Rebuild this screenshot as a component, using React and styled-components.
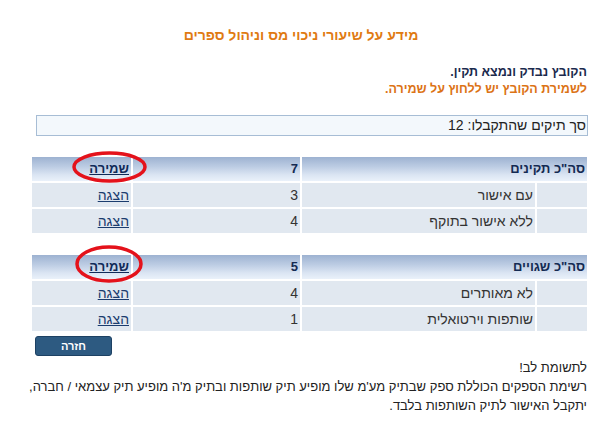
import styled, { createGlobalStyle } from "styled-components";

const GlobalStyle = createGlobalStyle`
  body {
    margin: 0;
    background: #ffffff;
    font-family: "Liberation Sans", Arial, sans-serif;
  }
`;

const groups = [
    {
        title: 'סה"כ תקינים',
        total: 7,
        ring: { left: 40, top: -6, width: 75, height: 32 },
        rows: [
            { label: "עם אישור", count: 3 },
            { label: "ללא אישור בתוקף", count: 4 },
        ],
        top: 21,
    },
    {
        title: 'סה"כ שגויים',
        total: 5,
        ring: { left: 43, top: -10, width: 68, height: 38 },
        rows: [
            { label: "לא מאותרים", count: 4 },
            { label: "שותפות וירטואלית", count: 1 },
        ],
        top: 22,
    },
];

const Ring = ({ left, top, width, height }) => (
    <RingSvg
        $left={left}
        $top={top}
        width={width}
        height={height}
        viewBox={`0 0 ${width} ${height}`}
    >
        <ellipse
            cx={width / 2}
            cy={height / 2}
            rx={width / 2 - 2}
            ry={height / 2 - 2}
            fill="none"
            stroke="#e4121b"
            strokeWidth="3.5"
        />
    </RingSvg>
);

const SummaryTable = ({ group }) => {
    return (
        <Table $top={group.top}>
            <HeadCell $span={2}>{group.title}</HeadCell>
            <HeadCell>{group.total}</HeadCell>
            <HeadCell $link>
                <SaveLink href="#">שמירה</SaveLink>
                <Ring {...group.ring} />
            </HeadCell>
            {group.rows.map((row) => (
                <RowGroup key={row.label}>
                    <Cell />
                    <Cell>{row.label}</Cell>
                    <Cell>{row.count}</Cell>
                    <Cell>
                        <ShowLink href="#">הצגה</ShowLink>
                    </Cell>
                </RowGroup>
            ))}
        </Table>
    );
};

const App = () => {
    return (
        <>
            <GlobalStyle />
            <Page>
                <Title>מידע על שיעורי ניכוי מס וניהול ספרים</Title>
                <Content>
                    <Status>
                        <StatusLine>הקובץ נבדק ונמצא תקין.</StatusLine>
                        <StatusLine $accent>לשמירת הקובץ יש ללחוץ על שמירה.</StatusLine>
                    </Status>
                    <CountBox>סך תיקים שהתקבלו: 12</CountBox>
                    {groups.map((group) => (
                        <SummaryTable key={group.title} group={group} />
                    ))}
                    <BackButton type="button">חזרה</BackButton>
                    <Note>
                        <NoteLine>לתשומת לב!</NoteLine>
                        <NoteLine>
                            רשימת הספקים הכוללת ספק שבתיק מע'מ שלו מופיע תיק שותפות
                            ובתיק מ'ה מופיע תיק עצמאי / חברה,
                        </NoteLine>
                        <NoteLine>יתקבל האישור לתיק השותפות בלבד.</NoteLine>
                    </Note>
                </Content>
            </Page>
        </>
    );
};

const Page = styled.div`
    direction: rtl;
    width: 602px;
    padding-top: 26px;
    color: #222222;
    font-size: 14px;
`;

const Title = styled.h1`
    margin: 0;
    text-align: center;
    font-size: 14px;
    line-height: 18px;
    font-weight: bold;
    color: #e07a12;
`;

const Content = styled.div`
    padding: 0 15px 0 32px;
`;

const Status = styled.div`
    margin-top: 20px;
    font-size: 12.5px;
    font-weight: bold;
    line-height: 17px;
`;

const StatusLine = styled.div`
    color: ${(props) => (props.$accent ? "#dc7316" : "#1b2a4e")};
`;

const CountBox = styled.div`
    margin: 17px -1px 0 4px;
    height: 19px;
    line-height: 19px;
    padding-right: 1px;
    border: 1px solid #a7bdd5;
    background-color: #f3f8fc;
    color: #222222;
`;

const Table = styled.div`
    display: grid;
    grid-template-columns: 50px 233px 167px 99px;
    grid-auto-rows: 24px;
    gap: 2px;
    margin-top: ${(props) => props.$top}px;
`;

const RowGroup = styled.div`
    display: contents;
`;

const HeadCell = styled.div`
    position: relative;
    grid-column: span ${(props) => props.$span || 1};
    padding-right: 2px;
    line-height: 24px;
    font-size: 13px;
    font-weight: bold;
    color: #142a52;
    background: linear-gradient(
        to bottom,
        #9db2d1 0%,
        #bccce3 40%,
        #dbe5f3 75%,
        #eaf1fa 100%
    );
    z-index: ${(props) => (props.$link ? 2 : "auto")};
`;

const Cell = styled.div`
    padding-right: 2px;
    line-height: 24px;
    background-color: #e1e8f0;
    color: #333333;
`;

const SaveLink = styled.a`
    color: #102a58;
    font-weight: bold;
    text-decoration: underline;
`;

const ShowLink = styled.a`
    color: #1b3c6e;
    text-decoration: underline;
`;

const RingSvg = styled.svg`
    position: absolute;
    left: ${(props) => props.$left}px;
    top: ${(props) => props.$top}px;
    overflow: visible;
    pointer-events: none;
`;

const BackButton = styled.button`
    display: block;
    margin: 5px auto 0 0;
    margin-left: 3px;
    width: 77px;
    height: 20px;
    padding: 0;
    border: 1px solid #1d4163;
    border-radius: 3px;
    background-color: #2d5a81;
    color: #ffffff;
    font-family: "Liberation Sans", Arial, sans-serif;
    font-size: 11px;
    font-weight: bold;
    cursor: pointer;
`;

const Note = styled.div`
    margin-top: 2px;
    font-size: 13px;
    line-height: 19px;
    color: #222222;
`;

const NoteLine = styled.div`
    white-space: nowrap;
`;

export default App;
